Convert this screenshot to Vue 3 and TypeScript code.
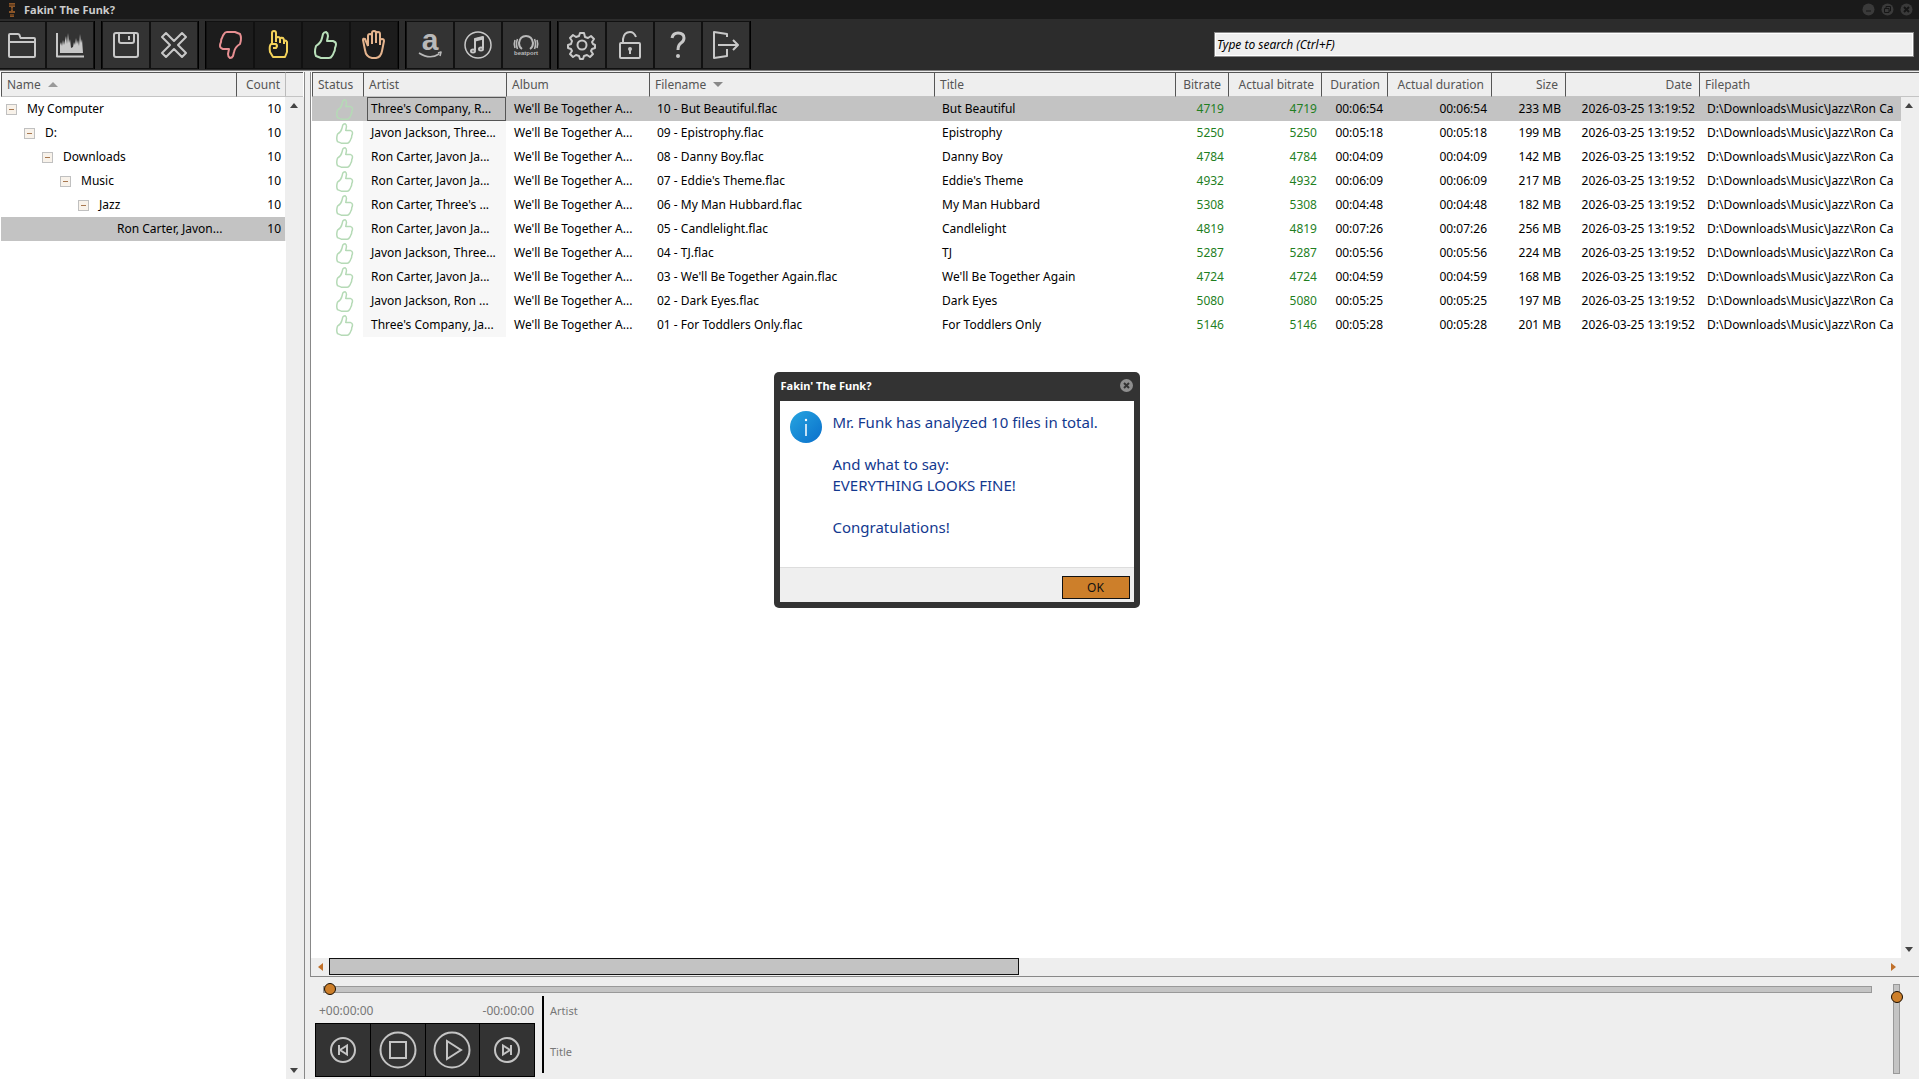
<script setup lang="ts">
import { ref } from 'vue'

interface ToolButton {
  id: string
  label: string
  dark?: boolean
}

interface Track {
  artist: string
  file: string
  title: string
  bitrate: number
  duration: string
  size: string
}

const toolGroups: ToolButton[][] = [
  [
    { id: 'folder', label: 'Open folder' },
    { id: 'spectrum', label: 'Spectrum' },
  ],
  [
    { id: 'save', label: 'Save' },
    { id: 'clear', label: 'Clear' },
  ],
  [
    { id: 'down', label: 'Bad files', dark: true },
    { id: 'point', label: 'Suspicious files', dark: true },
    { id: 'up', label: 'Good files', dark: true },
    { id: 'hand', label: 'Stopped files', dark: true },
  ],
  [
    { id: 'amazon', label: 'Amazon' },
    { id: 'music', label: 'Music store' },
    { id: 'beatport', label: 'Beatport' },
  ],
  [
    { id: 'gear', label: 'Settings' },
    { id: 'lock', label: 'Unlock' },
    { id: 'help', label: 'Help' },
    { id: 'exit', label: 'Exit' },
  ],
]

const thumb = 'M14 25q5-3 6-8l1-4q1-2 3-2 2 1 2 4l-1 5h6q3 1 3 3 0 2-1 4 0 3-1 4-1 3-2 4-1 2-3 2H19l-5-2q-2-4 0-10z'

const folders = ['My Computer', 'D:', 'Downloads', 'Music', 'Jazz', 'Ron Carter, Javon...']

const columns = [
  { name: 'Status', key: 'status' },
  { name: 'Artist', key: 'artist' },
  { name: 'Album', key: 'album' },
  { name: 'Filename', key: 'file' },
  { name: 'Title', key: 'title' },
  { name: 'Bitrate', key: 'bitrate', right: true },
  { name: 'Actual bitrate', key: 'abitrate', right: true },
  { name: 'Duration', key: 'duration', right: true },
  { name: 'Actual duration', key: 'aduration', right: true },
  { name: 'Size', key: 'size', right: true },
  { name: 'Date', key: 'date', right: true },
  { name: 'Filepath', key: 'path' },
]

const album = "We'll Be Together A..."
const date = '2026-03-25 13:19:52'
const path = 'D:\\Downloads\\Music\\Jazz\\Ron Ca'

const tracks: Track[] = [
  { artist: "Three's Company, R...", file: '10 - But Beautiful.flac', title: 'But Beautiful', bitrate: 4719, duration: '00:06:54', size: '233 MB' },
  { artist: 'Javon Jackson, Three...', file: '09 - Epistrophy.flac', title: 'Epistrophy', bitrate: 5250, duration: '00:05:18', size: '199 MB' },
  { artist: 'Ron Carter, Javon Ja...', file: '08 - Danny Boy.flac', title: 'Danny Boy', bitrate: 4784, duration: '00:04:09', size: '142 MB' },
  { artist: 'Ron Carter, Javon Ja...', file: "07 - Eddie's Theme.flac", title: "Eddie's Theme", bitrate: 4932, duration: '00:06:09', size: '217 MB' },
  { artist: "Ron Carter, Three's ...", file: '06 - My Man Hubbard.flac', title: 'My Man Hubbard', bitrate: 5308, duration: '00:04:48', size: '182 MB' },
  { artist: 'Ron Carter, Javon Ja...', file: '05 - Candlelight.flac', title: 'Candlelight', bitrate: 4819, duration: '00:07:26', size: '256 MB' },
  { artist: 'Javon Jackson, Three...', file: '04 - TJ.flac', title: 'TJ', bitrate: 5287, duration: '00:05:56', size: '224 MB' },
  { artist: 'Ron Carter, Javon Ja...', file: "03 - We'll Be Together Again.flac", title: "We'll Be Together Again", bitrate: 4724, duration: '00:04:59', size: '168 MB' },
  { artist: 'Javon Jackson, Ron ...', file: '02 - Dark Eyes.flac', title: 'Dark Eyes', bitrate: 5080, duration: '00:05:25', size: '197 MB' },
  { artist: "Three's Company, Ja...", file: '01 - For Toddlers Only.flac', title: 'For Toddlers Only', bitrate: 5146, duration: '00:05:28', size: '201 MB' },
]

const selected = ref(0)
const search = ref('')
const position = ref(0)
const volume = ref(92)
const dialogOpen = ref(true)
</script>

<template>
  <div class="app">
    <header class="titlebar">
      <svg class="logo" width="20" height="20" viewBox="0 0 20 20" aria-hidden="true">
        <g fill="#8a5528">
          <rect x="7" y="3" width="6" height="4" />
          <rect x="9" y="7" width="2" height="5" />
          <rect x="7" y="11" width="6" height="2" />
          <rect x="8" y="14" width="4" height="3" />
        </g>
        <path d="M7 5h6M9 9h2M8 15h4" stroke="#4a3018" />
      </svg>
      <h1>Fakin' The Funk?</h1>
      <div class="winbtns">
        <button type="button" aria-label="Minimize"><svg width="13" height="13" viewBox="0 0 13 13"><circle cx="6.500" cy="6.500" r="6" /><path d="M4 8h5" /></svg></button>
        <button type="button" aria-label="Restore"><svg width="13" height="13" viewBox="0 0 13 13"><circle cx="6.500" cy="6.500" r="6" /><path d="M5 5V3.500h4.500V8H8M3.500 5.500H8V9.500H3.500z" /></svg></button>
        <button type="button" aria-label="Close"><svg width="13" height="13" viewBox="0 0 13 13"><circle cx="6.500" cy="6.500" r="6" /><path d="M4 4l5 5M9 4l-5 5" stroke-width="2" /></svg></button>
      </div>
    </header>

    <nav class="toolbar">
      <div v-for="(group, g) in toolGroups" :key="g" class="group">
        <button v-for="b in group" :key="b.id" type="button" class="tool" :class="{ dark: b.dark }" :aria-label="b.label">
          <svg width="46" height="46" viewBox="1 1 46 46" fill="none" stroke="#c8c8c8" stroke-width="2" stroke-linejoin="round">
            <path v-if="b.id === 'folder'" d="M11 35V14q0-1 1-1h8q1 0 1.500 1l1 3H36q1 0 1 1v17q0 1-1 1H12q-1 0-1-1zM11 21h26" />
            <g v-else-if="b.id === 'spectrum'">
              <path d="M11 12v23.500H38" />
              <path stroke="none" fill="#c8c8c8" d="M14 32v-8l1-3 1 4 1-6 1 5 2-9 1 8 1-11 1 10 1-4 1 9 2-1 1-5 1 3 1-7 1 6 1-4 1 6 1-12 1 9 1-4 1 14z" />
            </g>
            <path v-else-if="b.id === 'save'" d="M14 12h20q2 0 2 2v20q0 2-2 2H14q-2 0-2-2V14q0-2 2-2zM17 12v8q0 2 2 2h11q2 0 2-2v-8M27 15v4" />
            <path v-else-if="b.id === 'clear'" d="M16 12l8 8 8-8 4 4-8 8 8 8-4 4-8-8-8 8-4-4 8-8-8-8z" />
            <path v-else-if="b.id === 'down'" stroke="#e88f92" transform="rotate(180 24 24)" :d="thumb" />
            <g v-else-if="b.id === 'point'" stroke="#f3d25a">
              <path d="M18 23V12q0-2 2-2t2 2v9M22 18q0-2 2-2t2 2v4M26 18q1-2 3-1 1 1 1 3v3M30 20q2-1 3 1v10l-2 5H19l-3-5q-1-6 1-8h5q2 2 0 4h-3" />
            </g>
            <path v-else-if="b.id === 'up'" stroke="#b9e0ba" :d="thumb" />
            <path v-else-if="b.id === 'hand'" stroke="#e5b48e" d="M18 25V15q0-2 2-2t2 2v8M22 22V12q0-2 2-2t2 2v10M26 22V13q0-2 2-2t2 2v11M18 25l-3-7q-2-1-2 1l2 10q1 7 7 8h4q5-1 6-7l2-10q0-2-2-2t-2 2v4" />
            <g v-else-if="b.id === 'amazon'" stroke="#b9b9b9">
              <text x="24" y="29" class="amazon">a</text>
              <path d="M13 32q11 7 20 1M32 32l3-1-1 4" stroke-width="1.600" />
            </g>
            <g v-else-if="b.id === 'music'">
              <circle cx="24" cy="24" r="13" stroke-width="1.500" />
              <path d="M21 29V18l8-2v11" />
              <path d="M21 19l8-2" stroke-width="3" />
              <ellipse cx="19" cy="30" rx="2" ry="1.500" /><ellipse cx="27" cy="28" rx="2" ry="1.500" />
            </g>
            <g v-else-if="b.id === 'beatport'" stroke="#b9b9b9">
              <path d="M20 28q-3-2-3-6 1-7 7-7t7 7q0 4-3 6" />
              <path d="M15.500 18q-2 5 0 10M13 19q-1.500 4 0 8M32.500 18q2 5 0 10M35 19q1.500 4 0 8" stroke-width="1.600" />
              <text x="24" y="34" class="beatport">beatport</text>
            </g>
            <g v-else-if="b.id === 'gear'">
              <circle cx="24" cy="24" r="4.500" />
              <path d="M22 12h4l1 4 3 1 3-2 3 3-2 3 1 2 2 1v3l-3 1-1 2 2 3-3 3-3-2-3 1-1 3h-3l-1-3-3-1-3 2-3-3 2-3-1-2-3-1v-3l3-1 1-3-2-3 3-3 3 2 3-1z" />
            </g>
            <g v-else-if="b.id === 'lock'">
              <rect x="14" y="22" width="20" height="15" rx="1" />
              <path d="M17 22v-4q1-7 7-7 4 0 6 5" />
              <circle cx="24" cy="28" r="2" fill="#c8c8c8" stroke="none" /><path d="M24 28v5" />
            </g>
            <g v-else-if="b.id === 'help'">
              <path d="M18 17q1-5 6-5 6 0 6 5 0 3-3 5-3 2-3 7" stroke-width="3" />
              <circle cx="24" cy="35" r="2" fill="#c8c8c8" stroke="none" />
            </g>
            <path v-else d="M25 16v-3l-13-2v26l13-2v-7M16 24h20M31 19l5 5-5 5" />
          </svg>
        </button>
      </div>
      <input v-model="search" class="search" type="text" aria-label="Search" placeholder="Type to search (Ctrl+F)" />
    </nav>

    <div class="main">
      <aside class="side">
        <table class="tree">
          <colgroup><col /><col class="c-count" /><col class="c-bar" /></colgroup>
          <thead>
            <tr><th>Name<i class="sort asc"></i></th><th class="right">Count</th><th class="stub"></th></tr>
          </thead>
          <tbody>
            <tr v-for="(f, i) in folders" :key="f" :class="{ sel: i === 5 }">
              <td>
                <div class="node" :style="{ paddingLeft: 5 + i * 18 + 'px' }">
                  <button v-if="i < 5" type="button" class="toggle" aria-label="Collapse"></button>
                  <span v-else class="leaf"></span>
                  <span>{{ f }}</span>
                </div>
              </td>
              <td class="right">10</td>
              <td class="stub"></td>
            </tr>
          </tbody>
        </table>
        <div class="vbar">
          <button type="button" class="arrow" aria-label="Scroll up"><i class="tri up"></i></button>
          <button type="button" class="arrow" aria-label="Scroll down"><i class="tri dn"></i></button>
        </div>
      </aside>

      <section class="content">
        <div class="grid">
          <table class="files">
            <colgroup><col v-for="c in columns" :key="c.key" :class="'c-' + c.key" /></colgroup>
            <thead>
              <tr>
                <th v-for="c in columns" :key="c.key" :class="{ right: c.right }">{{ c.name }}<i v-if="c.key === 'file'" class="sort desc"></i></th>
              </tr>
            </thead>
            <tbody>
              <tr v-for="(t, i) in tracks" :key="t.file" :class="{ sel: i === selected }" @click="selected = i">
                <td class="status">
                  <svg width="18" height="22" viewBox="12 9 24 29" fill="none" stroke="#b5dab6" stroke-width="2" stroke-linejoin="round">
                    <path :d="thumb" />
                  </svg>
                </td>
                <td class="artist"><div>{{ t.artist }}</div></td>
                <td>{{ album }}</td>
                <td>{{ t.file }}</td>
                <td>{{ t.title }}</td>
                <td class="right rate">{{ t.bitrate }}</td>
                <td class="right rate">{{ t.bitrate }}</td>
                <td class="right">{{ t.duration }}</td>
                <td class="right">{{ t.duration }}</td>
                <td class="right">{{ t.size }}</td>
                <td class="right">{{ date }}</td>
                <td>{{ path }}</td>
              </tr>
            </tbody>
          </table>
          <div class="vbar">
            <button type="button" class="arrow" aria-label="Scroll up"><i class="tri up"></i></button>
            <button type="button" class="arrow" aria-label="Scroll down"><i class="tri dn"></i></button>
          </div>
        </div>
        <div class="hbar">
          <button type="button" class="harrow" aria-label="Scroll left"><i class="tri lt"></i></button>
          <div class="hrail"><div class="hthumb"></div></div>
          <button type="button" class="harrow" aria-label="Scroll right"><i class="tri rt"></i></button>
        </div>

        <footer class="player">
          <div class="deck">
            <input v-model.number="position" class="seek" type="range" min="0" max="100" aria-label="Position" />
            <div class="lower">
              <div class="transport">
                <div class="times"><span>+00:00:00</span><span>-00:00:00</span></div>
                <div class="keys">
                  <button type="button" aria-label="Previous">
                    <svg width="28" height="28" viewBox="0 0 28 28"><circle cx="14" cy="14" r="12" /><path d="M10 9v10M18 9.500v9L11 14z" /></svg>
                  </button>
                  <button type="button" aria-label="Stop">
                    <svg width="38" height="38" viewBox="0 0 38 38"><circle cx="19" cy="19" r="17.500" /><path d="M11 11h16v16H11z" /></svg>
                  </button>
                  <button type="button" aria-label="Play">
                    <svg width="38" height="38" viewBox="0 0 38 38"><circle cx="19" cy="19" r="17.500" /><path d="M14 10v18l14-9z" /></svg>
                  </button>
                  <button type="button" aria-label="Next">
                    <svg width="28" height="28" viewBox="0 0 28 28"><circle cx="14" cy="14" r="12" /><path d="M18 9v10M10 9.500v9L17 14z" /></svg>
                  </button>
                </div>
              </div>
              <div class="meta"><span>Artist</span><span>Title</span></div>
            </div>
          </div>
          <input v-model.number="volume" class="volume" type="range" min="0" max="100" aria-label="Volume" />
        </footer>
      </section>
    </div>

    <div v-if="dialogOpen" class="dialog" role="dialog" aria-labelledby="dlg-title">
      <div class="dlg-head">
        <h2 id="dlg-title">Fakin' The Funk?</h2>
        <button type="button" aria-label="Close" @click="dialogOpen = false">
          <svg width="13" height="13" viewBox="0 0 13 13"><circle cx="6.500" cy="6.500" r="6.500" fill="#8f8f8f" /><path d="M4 4l5 5M9 4l-5 5" stroke="#333" stroke-width="2" /></svg>
        </button>
      </div>
      <div class="dlg-body">
        <svg width="32" height="32" viewBox="0 0 32 32" aria-hidden="true">
          <defs><linearGradient id="info" x1="0" y1="0" x2="1" y2="1"><stop offset="0" stop-color="#26a5e0" /><stop offset="1" stop-color="#0a6fcb" /></linearGradient></defs>
          <circle cx="16" cy="16" r="16" fill="url(#info)" />
          <path d="M16 13v12" stroke="#fff" stroke-width="1.500" /><circle cx="16" cy="9" r="1.200" fill="#fff" />
        </svg>
        <div class="msg">
          <p>Mr. Funk has analyzed 10 files in total.</p>
          <p>And what to say:<br />EVERYTHING LOOKS FINE!</p>
          <p>Congratulations!</p>
        </div>
      </div>
      <div class="dlg-foot"><button type="button" @click="dialogOpen = false">OK</button></div>
    </div>
  </div>
</template>

<style>
body {
  margin: 0;
  background: #eee;
}
</style>

<style scoped>
.app {
  position: relative;
  display: flex;
  flex-direction: column;
  height: 100vh;
  overflow: hidden;
  background: #eee;
  color: #000;
  font: 12px/24px "Noto Sans", "Open Sans", sans-serif;
}
button {
  margin: 0;
  padding: 0;
  border: 0;
  background: none;
  font: inherit;
}
svg {
  display: block;
}
.titlebar {
  display: flex;
  align-items: center;
  height: 19px;
  padding: 0 6px 0 2px;
  background: #1a1a1a;
}
h1,
h2 {
  margin: 0;
  font-size: 11px;
  font-weight: 700;
  line-height: 19px;
}
h1 {
  flex: 1;
  margin-left: 2px;
  color: #ccc;
}
.winbtns {
  display: flex;
  gap: 6px;
}
.winbtns svg {
  fill: #3a3a3a;
  stroke: #161616;
}
.winbtns circle {
  stroke: none;
}
.winbtns path {
  fill: none;
}
.toolbar {
  display: flex;
  align-items: center;
  gap: 8px;
  height: 51px;
  padding-right: 5px;
  border-bottom: 1px solid #808080;
  background: #2c2c2c;
}
.group {
  display: flex;
  border-left: 1px solid #000;
  border-right: 1px solid #000;
  margin: 0 -1px;
}
.group:first-child {
  margin-left: -3px;
}
.tool {
  box-sizing: border-box;
  width: 48px;
  height: 48px;
  border: 1px solid #111;
  background: #333;
}
.tool.dark {
  background: #1c1c1c;
}
.amazon {
  fill: #b9b9b9;
  stroke: none;
  font: 700 30px "Liberation Sans", sans-serif;
  text-anchor: middle;
}
.beatport {
  fill: #b9b9b9;
  stroke: none;
  font: 700 6px "Liberation Sans", sans-serif;
  text-anchor: middle;
}
.search {
  box-sizing: border-box;
  width: 700px;
  height: 25px;
  margin-left: auto;
  padding: 0 2px;
  border: 1px solid #888;
  outline: 1px solid #fff;
  outline-offset: -2px;
  background: #efefef;
  color: #000;
  font: italic 12px "Noto Sans", sans-serif;
}
.search::placeholder {
  color: #000;
  opacity: 1;
}
.main {
  display: flex;
  flex: 1;
  min-height: 0;
  padding-top: 1px;
}
.side {
  position: relative;
  box-sizing: border-box;
  width: 305px;
  padding: 0 1px;
  border-right: 1px solid #888;
  background: #fff;
}
table {
  width: 100%;
  border-collapse: separate;
  border-spacing: 0;
  table-layout: fixed;
}
th {
  box-sizing: border-box;
  height: 25px;
  padding: 0 5px;
  border-top: 1px solid #555;
  border-left: 1px solid #555;
  border-bottom: 1px solid #c4c4c4;
  background: #eee;
  color: #555;
  font-weight: 400;
  line-height: 23px;
  text-align: left;
}
td {
  height: 24px;
  padding: 0 0 0 8px;
  overflow: hidden;
  white-space: nowrap;
}
th.right,
td.right {
  text-align: right;
}
th.right {
  padding-right: 7px;
}
td.right {
  padding: 0 4px 0 0;
}
.sel {
  background: #c3c3c3;
}
.sort {
  display: inline-block;
  margin: 0 0 3px 7px;
  border: 5px solid transparent;
  vertical-align: middle;
}
.sort.asc {
  border-top: 0;
  border-bottom-color: #999;
}
.sort.desc {
  border-bottom: 0;
  border-top-color: #888;
}
.c-count {
  width: 49px;
}
.c-bar {
  width: 18px;
}
.tree th.right {
  padding-right: 5px;
}
.tree td {
  padding-left: 0;
}
th.stub {
  border-left-color: #bbb;
}
td.stub {
  background: #eee;
}
.node {
  display: flex;
  align-items: center;
}
.toggle,
.leaf {
  box-sizing: border-box;
  width: 11px;
  height: 11px;
  margin-right: 10px;
}
.toggle {
  border: 1px solid #c0c0c0;
  background: linear-gradient(#a87850, #a87850) center / 5px 1px no-repeat #f8f2ea;
}
.vbar {
  position: absolute;
  top: 25px;
  right: 0;
  bottom: 0;
  display: flex;
  flex-direction: column;
  justify-content: space-between;
  width: 18px;
  background: #eee;
}
.arrow {
  display: flex;
  align-items: center;
  justify-content: center;
  width: 16px;
  height: 17px;
}
.tri {
  border: 4px solid transparent;
}
.tri.up {
  border-top: 0;
  border-bottom: 5px solid #444;
}
.tri.dn {
  border-bottom: 0;
  border-top: 5px solid #444;
}
.tri.lt {
  border-left: 0;
  border-right: 5px solid #c0702a;
}
.tri.rt {
  border-right: 0;
  border-left: 5px solid #c0702a;
}
.content {
  display: flex;
  flex: 1;
  flex-direction: column;
  min-width: 0;
  margin-left: 5px;
}
.grid {
  position: relative;
  flex: 1;
  min-height: 0;
  padding-left: 1px;
  overflow: hidden;
  border-left: 1px solid #888;
  background: #fff;
}
.c-status { width: 51px; }
.c-artist,
.c-album { width: 143px; }
.c-file { width: 285px; }
.c-title { width: 241px; }
.c-bitrate { width: 53px; }
.c-abitrate { width: 93px; }
.c-duration { width: 66px; }
.c-aduration { width: 104px; }
.c-size { width: 74px; }
.c-date { width: 134px; }
td.status {
  padding-left: 24px;
}
td.artist {
  padding: 0 0 0 4px;
  background: #f7f7f7;
}
td.artist div {
  padding-left: 4px;
}
.sel td.artist {
  background: none;
}
.sel td.artist div {
  padding-left: 3px;
  border: 1px solid #555;
  line-height: 22px;
}
.rate {
  color: #1f7f1f;
}
.hbar {
  display: flex;
  height: 18px;
  border-left: 1px solid #888;
  border-bottom: 1px solid #888;
  background: #eee;
}
.harrow {
  display: flex;
  align-items: center;
  justify-content: center;
  width: 18px;
}
.harrow:last-child {
  margin-right: 17px;
}
.hrail {
  flex: 1;
}
.hthumb {
  box-sizing: border-box;
  width: 44.400%;
  height: 17px;
  border: 1px solid #111;
  background: #c3c3c3;
}
.player {
  display: flex;
  height: 102px;
  color: #777;
}
.deck {
  flex: 1;
  padding: 6px 40px 0 5px;
}
.deck,
.transport {
  display: flex;
  flex-direction: column;
}
.seek,
.volume {
  appearance: none;
  margin: 0;
  background: none;
}
.seek {
  height: 12px;
  margin: 0 -22px 0 8px;
}
.seek::-webkit-slider-runnable-track {
  box-sizing: border-box;
  height: 7px;
  border: 1px solid #999;
  background: #c4c4c4;
}
.seek::-webkit-slider-thumb,
.volume::-webkit-slider-thumb {
  appearance: none;
  box-sizing: border-box;
  width: 12px;
  height: 12px;
  border: 1px solid #1a0e00;
  border-radius: 50%;
  background: #cd7f2a;
}
.seek::-webkit-slider-thumb {
  margin-top: -4px;
}
.lower {
  display: flex;
  gap: 7px;
}
.transport {
  width: 220px;
}
.times {
  display: flex;
  justify-content: space-between;
  padding: 4px 1px 0 4px;
  line-height: 24px;
}
.keys {
  display: flex;
  box-sizing: border-box;
  height: 54px;
  border: 1px solid #000;
  background: #333;
}
.keys button {
  display: flex;
  flex: 1;
  align-items: center;
  justify-content: center;
}
.keys button + button {
  border-left: 1px solid #000;
}
.keys svg {
  fill: none;
  stroke: #c4c4c4;
  stroke-width: 2;
}
.meta {
  display: flex;
  flex-direction: column;
  gap: 17px;
  height: 77px;
  margin-top: 1px;
  padding: 3px 0 0 6px;
  border-left: 2px solid #000;
  box-sizing: border-box;
  font-size: 11px;
}
.volume {
  width: 12px;
  height: 90px;
  margin: 7px 17px 0 0;
  writing-mode: vertical-lr;
  direction: rtl;
}
.volume::-webkit-slider-runnable-track {
  box-sizing: border-box;
  width: 7px;
  border: 1px solid #999;
  background: #c4c4c4;
}
.volume::-webkit-slider-thumb {
  margin-left: -3px;
}
.dialog {
  position: absolute;
  top: 372px;
  left: calc(50% - 186px);
  box-sizing: border-box;
  width: 366px;
  padding: 0 6px 6px;
  border-radius: 5px;
  background: #333;
}
.dlg-head {
  display: flex;
  align-items: center;
  justify-content: space-between;
  box-sizing: border-box;
  height: 29px;
  padding: 0 1px 2px;
}
h2 {
  color: #fff;
}
.dlg-body {
  display: flex;
  gap: 11px;
  box-sizing: border-box;
  height: 166px;
  padding: 10px;
  background: #fff;
}
.msg {
  padding-top: 1px;
  color: #13398f;
  font-size: 15px;
  line-height: 21px;
}
.msg p {
  margin: 0 0 21px;
}
.dlg-foot {
  display: flex;
  justify-content: flex-end;
  box-sizing: border-box;
  height: 35px;
  padding: 8px 4px 0;
  border-top: 1px solid #ddd;
  background: #efefef;
}
.dlg-foot button {
  box-sizing: border-box;
  width: 68px;
  height: 23px;
  border: 1px solid #111;
  background: #cd7f2a;
  color: #111;
  line-height: 21px;
}
</style>
